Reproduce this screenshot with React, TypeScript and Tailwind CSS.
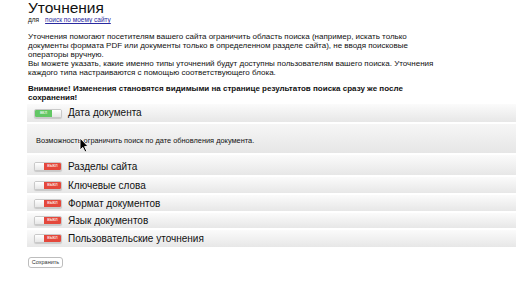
import { useState } from 'react'

interface Refinement {
  id: string;
  title: string;
  enabled: boolean;
  description?: string;
  height: string;
}

const refinements: Refinement[] = [
  { id: 'date', title: 'Дата документа', enabled: true, height: 'h-[18px]', description: 'Возможность ограничить поиск по дате обновления документа.' },
  { id: 'sections', title: 'Разделы сайта', enabled: false, height: 'h-[20px] pt-[3px]' },
  { id: 'keywords', title: 'Ключевые слова', enabled: false, height: 'h-[16px] pt-px' },
  { id: 'format', title: 'Формат документов', enabled: false, height: 'h-[16px] pt-px' },
  { id: 'lang', title: 'Язык документов', enabled: false, height: 'h-[15px]' },
  { id: 'custom', title: 'Пользовательские уточнения', enabled: false, height: 'h-[17px]' },
]

function Toggle({ on }: { on: boolean }) {
  return (
    <div className="flex h-[9px] w-[28px] overflow-hidden rounded-[2px] border border-[#c9c9c9] bg-white shadow-[0_1px_1px_rgba(0,0,0,0.15)]">
      {on ? (
        <>
          <div className="flex flex-1 items-center justify-center bg-[#62c764] text-[4.5px] leading-none text-white">вкл</div>
          <div className="w-[9px] bg-gradient-to-b from-white to-[#e6e6e6]" />
        </>
      ) : (
        <>
          <div className="w-[9px] bg-gradient-to-b from-white to-[#e6e6e6]" />
          <div className="flex flex-1 items-center justify-center bg-[#e4483c] text-[4.5px] leading-none text-white">выкл</div>
        </>
      )}
    </div>
  )
}

export default function App() {
  const [items] = useState(refinements)

  return (
    <div className="relative h-[290px] w-[516px] overflow-hidden bg-white pl-[28px] font-['Liberation_Sans',Arial,sans-serif] text-[#111]">
      {/* Header */}
      <h1 className="text-[15.5px] leading-[16px] font-normal">Уточнения</h1>
      <div className="flex items-center gap-[6px] text-[6.5px] leading-[8px]">
        <span>для</span>
        <a className="text-[#2a2aa0] underline">поиск по моему сайту</a>
      </div>

      {/* Description */}
      <div className="mt-[8px] text-[8px] leading-[9px] whitespace-nowrap">
        <p>
          Уточнения помогают посетителям вашего сайта ограничить область поиска (например, искать только
          <br />
          документы формата PDF или документы только в определенном разделе сайта), не вводя поисковые
          <br />
          операторы вручную.
        </p>
        <p>
          Вы можете указать, какие именно типы уточнений будут доступны пользователям вашего поиска. Уточнения
          <br />
          каждого типа настраиваются с помощью соответствующего блока.
        </p>
        <p className="mt-[7px] font-bold">
          Внимание! Изменения становятся видимыми на странице результатов поиска сразу же после
          <br />
          сохранения!
        </p>
      </div>

      {/* Refinement blocks */}
      <div className="mt-[2px] -ml-px flex flex-col gap-[2px]">
        {items.map((item) => (
          <div key={item.id} className="flex flex-col gap-[2px]">
            <div className={`flex ${item.height} items-center gap-[6px] bg-gradient-to-b from-[#fbfbfb] to-[#e7e7e7] pl-[7px]`}>
              <Toggle on={item.enabled} />
              <span className="text-[10px] leading-none">{item.title}</span>
            </div>
            {item.description && (
              <div className="flex h-[29px] items-center bg-gradient-to-b from-[#f6f6f6] to-[#e6e6e6] pl-[9px] pt-[5px] text-[7.4px]">
                {item.description}
              </div>
            )}
          </div>
        ))}
      </div>

      <button className="mt-[8px] h-[11px] w-[35px] rounded-[3px] border border-[#bdbdbd] bg-white text-[5.5px] leading-none text-[#333]">
        Сохранить
      </button>

      {/* Mouse pointer */}
      <svg className="absolute left-[79px] top-[137px]" width="10" height="16" viewBox="0 0 10 16">
        <path d="M1 1 L1 13 L3.8 10.4 L6 15 L7.8 14.2 L5.6 9.6 L9.2 9.6 Z" fill="#000" stroke="#fff" strokeWidth="0.9" />
      </svg>
    </div>
  )
}
